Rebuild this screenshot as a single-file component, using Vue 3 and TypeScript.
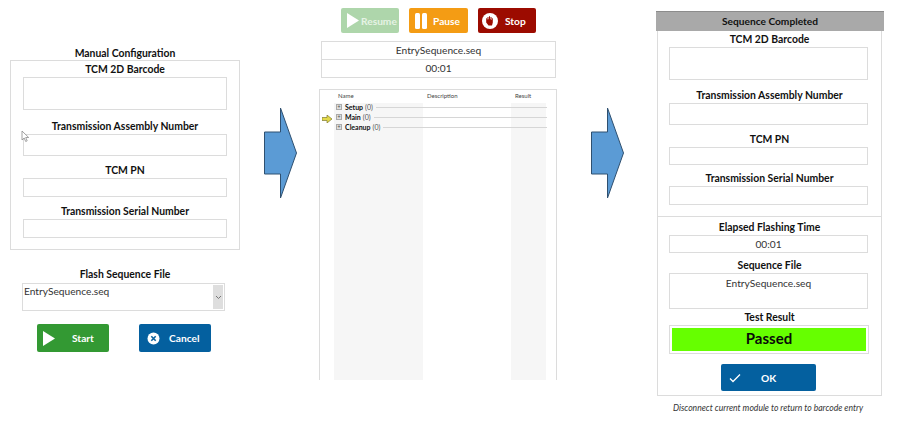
<template>
  <div class="page">
    <!-- manual configuration -->
    <section class="left">
      <h3 class="title">Manual Configuration</h3>
      <div class="panel">
        <template v-for="f in leftFields" :key="f.label">
          <label class="lbl" :class="f.cls">{{ f.label }}</label>
          <div class="box" :class="f.cls"></div>
        </template>
        <svg class="cursor" width="9" height="13" viewBox="0 0 9 13">
          <path d="M1 1v9l2.200-2 1.500 3.500 1.500-.7-1.500-3.300h3z" fill="#fff" stroke="#8a8a8a" stroke-width="0.8" />
        </svg>
      </div>
      <div class="flash">
        <label class="lbl">Flash Sequence File</label>
        <div class="combo">
          <span>EntrySequence.seq</span>
          <span class="combo-btn">
            <svg width="7" height="5" viewBox="0 0 7 5"><path d="M1 1l2.500 2.500L6 1" fill="none" stroke="#777" /></svg>
          </span>
        </div>
      </div>
      <div class="actions">
        <button class="btn green start">
          <svg width="13" height="15" viewBox="0 0 13 15"><path d="M0 0l12 7.500L0 15z" fill="#fff" /></svg>
          <span>Start</span>
        </button>
        <button class="btn blue cancel">
          <svg width="13" height="13" viewBox="0 0 13 13">
            <circle cx="6.500" cy="6.500" r="6" fill="#fff" />
            <path d="M4.300 4.300l4.400 4.400M8.700 4.300l-4.400 4.400" stroke="#0b629e" stroke-width="1.600" />
          </svg>
          <span>Cancel</span>
        </button>
      </div>
    </section>

    <svg class="arrow arrow-one" width="35" height="92" viewBox="0 0 35 92">
      <path d="M.5 25h16V1l16 45-16 45V67H.5z" fill="#5b9bd5" stroke="#2f5070" stroke-width="1" />
    </svg>

    <!-- running sequence -->
    <section class="middle">
      <div class="run-buttons">
        <button class="btn resume">
          <svg width="12" height="15" viewBox="0 0 12 15"><path d="M0 0l12 7.500L0 15z" fill="#fff" /></svg>
          <span>Resume</span>
        </button>
        <button class="btn orange pause">
          <svg width="12" height="16" viewBox="0 0 12 16">
            <rect x="0" y="0" width="5" height="16" rx="1.500" fill="#fff" />
            <rect x="7" y="0" width="5" height="16" rx="1.500" fill="#fff" />
          </svg>
          <span>Pause</span>
        </button>
        <button class="btn red stop">
          <svg width="16" height="16" viewBox="0 0 16 16">
            <circle cx="8" cy="8" r="8" fill="#fff" />
            <path d="M4.200 8V5.200h.9v1.300h.4V3.900h1v2.400h.5V3.200h1v3.100h.5V3.900h1v3h.4V5.200h.9V9.500L10 12.500H6.500L4.200 9.500z" fill="#9c0b00" />
          </svg>
          <span>Stop</span>
        </button>
      </div>
      <div class="info">
        <div class="info-row">EntrySequence.seq</div>
        <div class="info-row">00:01</div>
      </div>
      <div class="tree">
        <div class="tree-marker">
          <svg width="10" height="8" viewBox="0 0 10 8"><path d="M0 2.500h5V0l5 4-5 4V5.500H0z" fill="#e3d94a" stroke="#6e6a20" stroke-width="0.6" /></svg>
        </div>
        <div class="tree-grid">
          <div class="col col-name">Name</div>
          <div class="col col-desc">Description</div>
          <div class="col col-result">Result</div>
          <div class="tree-rows">
            <div v-for="s in steps" :key="s" class="step">
              <span class="plus">+</span><b>{{ s }}</b><span class="count">(0)</span><span class="line"></span>
            </div>
          </div>
        </div>
      </div>
    </section>

    <svg class="arrow arrow-two" width="35" height="92" viewBox="0 0 35 92">
      <path d="M.5 25h16V1l16 45-16 45V67H.5z" fill="#5b9bd5" stroke="#2f5070" stroke-width="1" />
    </svg>

    <!-- completed -->
    <section class="right">
      <div class="head">Sequence Completed</div>
      <div class="done-panel">
        <div class="done-top">
          <template v-for="f in rightFields" :key="f.label">
            <label class="lbl" :class="f.cls">{{ f.label }}</label>
            <div class="box" :class="f.cls"></div>
          </template>
        </div>
        <div class="done-bottom">
          <label class="lbl">Elapsed Flashing Time</label>
          <div class="box value time">00:01</div>
          <label class="lbl seq-lbl">Sequence File</label>
          <div class="box value seq">EntrySequence.seq</div>
          <label class="lbl res-lbl">Test Result</label>
          <div class="result"><div class="passed">Passed</div></div>
          <button class="btn blue ok">
            <svg width="12" height="10" viewBox="0 0 12 10"><path d="M1 5.500l3 3 7-7" fill="none" stroke="#fff" stroke-width="1.300" /></svg>
            <span>OK</span>
          </button>
        </div>
      </div>
      <p class="note">Disconnect current module to return to barcode entry</p>
    </section>
  </div>
</template>

<script setup lang="ts">
interface Field {
  label: string
  cls: string
}

const leftFields: Field[] = [
  { label: 'TCM 2D Barcode', cls: 'barcode' },
  { label: 'Transmission Assembly Number', cls: 'assembly' },
  { label: 'TCM PN', cls: 'pn' },
  { label: 'Transmission Serial Number', cls: 'serial' }
]
const rightFields: Field[] = leftFields
const steps = ['Setup', 'Main', 'Cleanup']
</script>

<style>
body {
  background: #fff;
}
</style>

<style scoped>
.page {
  display: flex;
  align-items: flex-start;
  width: 900px;
  height: 425px;
  overflow: hidden;
  font-family: Lato, "Open Sans", sans-serif;
  font-size: 10.200px;
  color: #333;
}

.lbl {
  display: block;
  padding-bottom: 1px;
  font-weight: 700;
  font-size: 10.400px;
  line-height: 13px;
  color: #111;
  text-align: center;
}

.box {
  border: 1px solid #dcdcdc;
  box-sizing: border-box;
  background: #fff;
}

.btn {
  display: flex;
  align-items: center;
  box-sizing: border-box;
  border: none;
  border-radius: 2px;
  padding: 0;
  color: #fff;
  font: inherit;
  font-weight: 700;
  font-size: 10.200px;
}

.green { background: #339933; }
.blue { background: #04609f; }
.orange { background: #f49c14; }
.red { background: #9c0b00; }

/* left column */
.left {
  width: 230px;
  margin-left: 10px;
  padding-top: 46px;
  flex: none;
}

.title {
  margin: 0;
  font-size: 10.400px;
  font-weight: 700;
  line-height: 14px;
  color: #111;
  text-align: center;
}

.panel {
  position: relative;
  box-sizing: border-box;
  height: 190px;
  border: 1px solid #dcdcdc;
  padding: 2px 12px 0;
}

.panel .box { width: 204px; }
.panel .barcode.box { height: 33px; }
.panel .assembly.lbl { margin-top: 10px; }
.panel .assembly.box { height: 22px; }
.panel .pn.lbl { margin-top: 8px; }
.panel .pn.box { height: 19px; }
.panel .serial.lbl { margin-top: 8px; }
.panel .serial.box { height: 19px; }

.cursor {
  position: absolute;
  left: 10px;
  top: 69px;
}

.flash {
  margin-top: 18px;
  padding: 0 12px;
}

.combo {
  display: flex;
  justify-content: space-between;
  box-sizing: border-box;
  width: 203px;
  height: 28px;
  margin-top: 1px;
  padding: 1px;
  border: 1px solid #dcdcdc;
  line-height: 12px;
}

.combo-btn {
  display: flex;
  align-items: center;
  justify-content: center;
  width: 10px;
  background: #dedede;
}

.actions {
  display: flex;
  gap: 30px;
  margin-top: 13px;
  padding-left: 27px;
}

.start,
.cancel {
  width: 72px;
  height: 28px;
}

.start { padding-left: 6px; gap: 16px; }
.cancel { padding-left: 8px; gap: 9px; }

/* arrows */
.arrow {
  flex: none;
  margin-top: 107px;
}
.arrow-one { margin-left: 24px; }
.arrow-two { margin-left: 34px; }

/* middle column */
.middle {
  flex: none;
  width: 238px;
  margin-left: 20px;
  padding-top: 8px;
}

.run-buttons {
  display: flex;
  gap: 10px;
  padding-left: 22px;
}

.run-buttons .btn {
  height: 25px;
}

.resume {
  width: 58px;
  background: #aed6ab;
  color: #e6f3e5;
  padding-left: 6px;
  gap: 2px;
}
.pause { width: 59px; padding-left: 6px; gap: 6px; }
.stop { width: 58px; padding-left: 4px; gap: 7px; }

.info {
  margin: 8px 1px 0 2px;
  border: 1px solid #dcdcdc;
}

.info-row {
  height: 17px;
  line-height: 17px;
  text-align: center;
}

.info-row + .info-row {
  box-sizing: content-box;
  border-top: 1px solid #dcdcdc;
}

.tree {
  display: flex;
  box-sizing: border-box;
  height: 291px;
  margin-top: 11px;
  border: 1px solid #dcdcdc;
  border-bottom: none;
  padding-right: 9px;
}

.tree-marker {
  width: 14px;
  padding: 23px 0 0 2px;
  box-sizing: border-box;
  flex: none;
}

.tree-grid {
  position: relative;
  display: grid;
  flex: 1;
  grid-template-columns: 89px 88px 35px;
}

.col {
  height: 100%;
  padding: 0 0 0 4px;
  font-size: 6px;
  line-height: 11px;
  color: #444;
  box-sizing: border-box;
}

.col-name,
.col-result {
  background: linear-gradient(#fff 13px, #f6f6f6 13px);
}

.tree-rows {
  position: absolute;
  top: 12px;
  left: 0;
  right: 0;
}

.step {
  display: flex;
  align-items: center;
  height: 10px;
  padding-left: 2px;
  font-size: 7px;
  color: #111;
}

.plus {
  width: 6px;
  height: 6px;
  margin-right: 3px;
  border: 1px solid #aaa;
  box-sizing: border-box;
  background: #ddd;
  color: #444;
  font-size: 5px;
  line-height: 4px;
  text-align: center;
}

.count {
  margin-left: 2px;
  color: #555;
}

.line {
  flex: 1;
  height: 1px;
  margin-left: 3px;
  background: #d6d6d6;
}

/* right column */
.right {
  flex: none;
  width: 228px;
  margin-left: 30px;
  padding-top: 11px;
}

.head {
  height: 20px;
  background: #a9a9a9;
  border-top: 1px solid #8c8c8c;
  box-sizing: border-box;
  font-weight: 700;
  font-size: 10.200px;
  line-height: 19px;
  color: #111;
  text-align: center;
}

.done-panel {
  box-sizing: border-box;
  width: 225px;
  height: 365px;
  margin-left: 1px;
  border: 1px solid #dcdcdc;
  border-top: none;
}

.done-top {
  box-sizing: border-box;
  height: 186px;
  padding: 2px 11px 0;
  border-bottom: 1px solid #dcdcdc;
}

.done-top .box { width: 199px; }
.done-top .barcode.box { height: 33px; }
.done-top .assembly.lbl { margin-top: 9px; }
.done-top .assembly.box { height: 22px; }
.done-top .pn.lbl { margin-top: 8px; }
.done-top .pn.box { height: 18px; }
.done-top .serial.lbl { margin-top: 7px; }
.done-top .serial.box { height: 19px; }

.done-bottom {
  padding: 4px 11px 0;
}

.value {
  width: 199px;
  text-align: center;
}

.time {
  height: 18px;
  line-height: 16px;
}

.seq-lbl { margin-top: 6px; }
.res-lbl { margin-top: 2px; }

.seq {
  height: 36px;
  line-height: 18px;
}

.result {
  box-sizing: border-box;
  width: 200px;
  height: 29px;
  border: 1px solid #dcdcdc;
  padding: 2px;
}

.passed {
  height: 100%;
  background: #66ff00;
  font-size: 15px;
  font-weight: 700;
  line-height: 21px;
  color: #0a0a0a;
  text-align: center;
}

.ok {
  width: 95px;
  height: 27px;
  margin: 10px 0 0 52px;
  padding-left: 8px;
  gap: 20px;
}

.note {
  margin: 7px 0 0;
  width: 224px;
  font-size: 8.600px;
  font-style: italic;
  line-height: 10px;
  color: #333;
  text-align: center;
}
</style>
